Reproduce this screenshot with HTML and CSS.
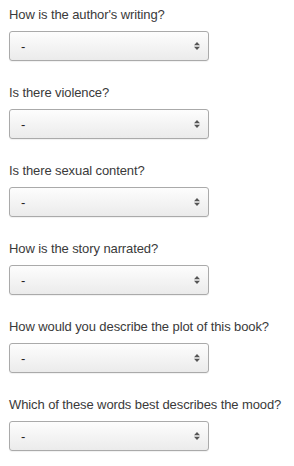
FILE: index.html
```html
<!DOCTYPE html>
<html lang="en">

<head>
    <meta charset="UTF-8">
    <meta name="viewport" content="width=device-width, initial-scale=1.0">
    <title>Book questions</title>
    <link rel="stylesheet" href="styles.css">
</head>

<body>
    <form class="questions">
        <div class="question">
            <label class="question-label" for="q-writing">How is the author's writing?</label>
            <div class="select-wrap">
                <select id="q-writing" class="question-select"><option>-</option></select>
                <svg class="select-arrows" width="6" height="8" viewBox="0 0 6 8"><path d="M0 3.2 L3 0 L6 3.2Z M0 4.8 L3 8 L6 4.8Z" fill="#555"/></svg>
            </div>
        </div>

        <div class="question">
            <label class="question-label" for="q-violence">Is there violence?</label>
            <div class="select-wrap">
                <select id="q-violence" class="question-select"><option>-</option></select>
                <svg class="select-arrows" width="6" height="8" viewBox="0 0 6 8"><path d="M0 3.2 L3 0 L6 3.2Z M0 4.8 L3 8 L6 4.8Z" fill="#555"/></svg>
            </div>
        </div>

        <div class="question">
            <label class="question-label" for="q-sexual">Is there sexual content?</label>
            <div class="select-wrap">
                <select id="q-sexual" class="question-select"><option>-</option></select>
                <svg class="select-arrows" width="6" height="8" viewBox="0 0 6 8"><path d="M0 3.2 L3 0 L6 3.2Z M0 4.8 L3 8 L6 4.8Z" fill="#555"/></svg>
            </div>
        </div>

        <div class="question">
            <label class="question-label" for="q-narrated">How is the story narrated?</label>
            <div class="select-wrap">
                <select id="q-narrated" class="question-select"><option>-</option></select>
                <svg class="select-arrows" width="6" height="8" viewBox="0 0 6 8"><path d="M0 3.2 L3 0 L6 3.2Z M0 4.8 L3 8 L6 4.8Z" fill="#555"/></svg>
            </div>
        </div>

        <div class="question">
            <label class="question-label" for="q-plot">How would you describe the plot of this book?</label>
            <div class="select-wrap">
                <select id="q-plot" class="question-select"><option>-</option></select>
                <svg class="select-arrows" width="6" height="8" viewBox="0 0 6 8"><path d="M0 3.2 L3 0 L6 3.2Z M0 4.8 L3 8 L6 4.8Z" fill="#555"/></svg>
            </div>
        </div>

        <div class="question">
            <label class="question-label" for="q-mood">Which of these words best describes the mood?</label>
            <div class="select-wrap">
                <select id="q-mood" class="question-select"><option>-</option></select>
                <svg class="select-arrows" width="6" height="8" viewBox="0 0 6 8"><path d="M0 3.2 L3 0 L6 3.2Z M0 4.8 L3 8 L6 4.8Z" fill="#555"/></svg>
            </div>
        </div>
    </form>
</body>

</html>
```

FILE: styles.css
```css
* {
    box-sizing: border-box;
}

body {
    margin: 0;
    background-color: #fff;
    font-family: "Liberation Sans", Arial, sans-serif;
    color: #3a3a3a;
}

.questions {
    padding: 6px 9px 0;
    margin: 0;
}

.question {
    margin-bottom: 23px;
}

.question-label {
    display: block;
    font-size: 13px;
    line-height: 18px;
    margin-bottom: 7px;
    white-space: nowrap;
    letter-spacing: -0.1px;
}

.select-wrap {
    position: relative;
    width: 200px;
}

.question-select {
    appearance: none;
    -webkit-appearance: none;
    display: block;
    width: 100%;
    height: 30px;
    margin: 0;
    padding: 0 24px 0 11px;
    font-family: "Liberation Sans", Arial, sans-serif;
    font-size: 13px;
    color: #222;
    border: 1px solid #aaa;
    border-radius: 3px;
    background: linear-gradient(#fdfdfd, #ebebeb);
    box-shadow: 0 1px 1px rgba(0, 0, 0, 0.06);
}

.select-arrows {
    position: absolute;
    right: 9px;
    top: 11px;
    pointer-events: none;
}
```
